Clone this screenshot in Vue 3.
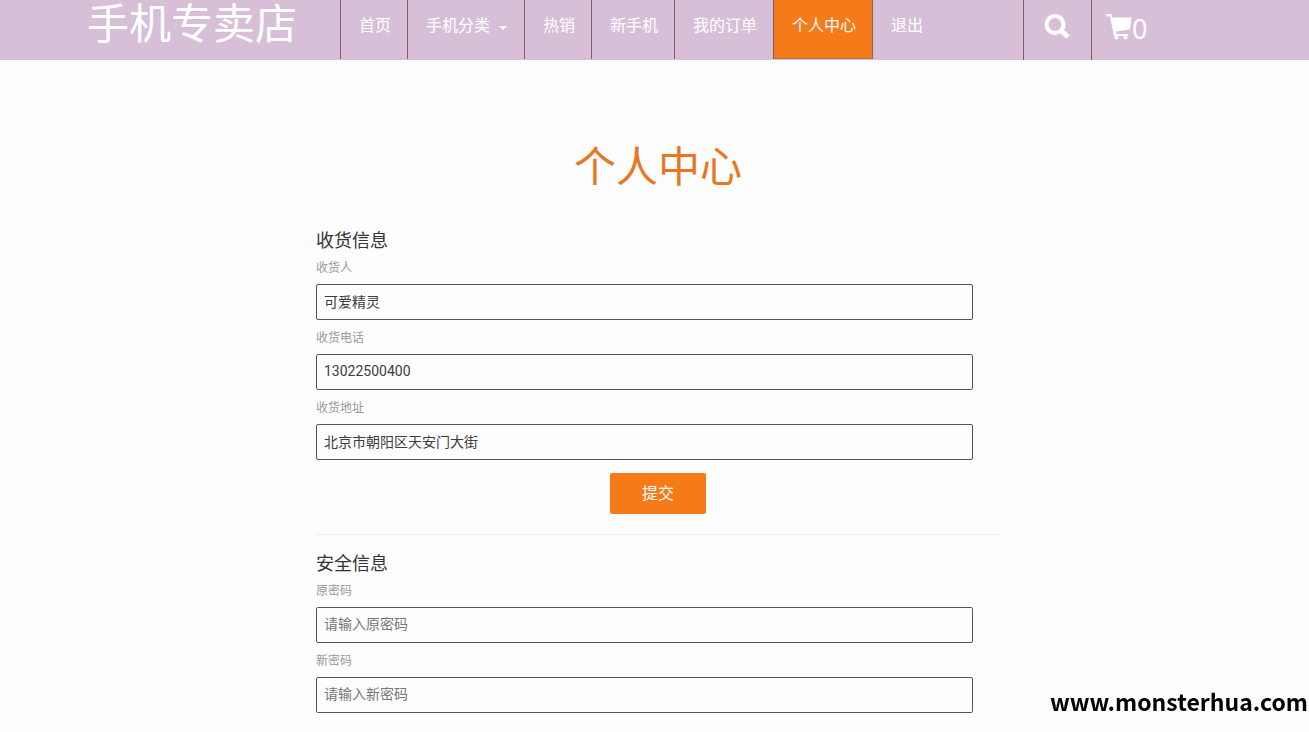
<script setup>
import { ref } from 'vue'

const navItems = [
  { label: '首页' },
  { label: '手机分类', caret: true },
  { label: '热销' },
  { label: '新手机' },
  { label: '我的订单' },
  { label: '个人中心', active: true },
  { label: '退出' }
]

const shipping = ref([
  { id: 'receiver', label: '收货人', type: 'text', value: '可爱精灵' },
  { id: 'phone', label: '收货电话', type: 'text', value: '13022500400' },
  { id: 'address', label: '收货地址', type: 'text', value: '北京市朝阳区天安门大街' }
])

const security = ref([
  { id: 'old-password', label: '原密码', placeholder: '请输入原密码', value: '' },
  { id: 'new-password', label: '新密码', placeholder: '请输入新密码', value: '' }
])
</script>

<template>
  <div class="page">
    <header class="header">
      <div class="bar">
        <a class="brand" href="#">手机专卖店</a>
        <nav class="nav">
          <a
            v-for="item in navItems"
            :key="item.label"
            href="#"
            class="nav-link"
            :class="{ active: item.active }"
          >{{ item.label }}<span v-if="item.caret" class="caret"></span></a>
        </nav>
        <div class="actions">
          <button class="search" type="button" aria-label="搜索">
            <svg width="28" height="28" viewBox="0 0 28 28">
              <circle cx="11" cy="11.500" r="8.500" fill="none" stroke="#fff" stroke-width="4" />
              <path d="M17.500 18l6.500 6" stroke="#fff" stroke-width="5" />
            </svg>
          </button>
          <a class="cart" href="#" aria-label="购物车">
            <svg width="26" height="27" viewBox="0 0 26 27" fill="#fff">
              <path d="M1 0h4.500l1 3.500H25.500L24 15.500l-14 2 .5 2.500H22v2H8L4 2.500H1a1.200 1.200 0 0 1 0-2.500z" />
              <circle cx="10.500" cy="23.500" r="2" />
              <circle cx="19.500" cy="23.500" r="2" />
            </svg>
            <span>0</span>
          </a>
        </div>
      </div>
    </header>

    <main class="main">
      <div class="content">
        <h1>个人中心</h1>
        <form @submit.prevent>
          <h2>收货信息</h2>
          <div v-for="field in shipping" :key="field.id" class="field">
            <label :for="field.id">{{ field.label }}</label>
            <input :id="field.id" v-model="field.value" :type="field.type" />
          </div>
          <button class="submit" type="submit">提交</button>
        </form>
        <hr />
        <form @submit.prevent>
          <h2>安全信息</h2>
          <div v-for="field in security" :key="field.id" class="field">
            <label :for="field.id">{{ field.label }}</label>
            <input
              :id="field.id"
              v-model="field.value"
              type="password"
              autocomplete="off"
              :placeholder="field.placeholder"
            />
          </div>
        </form>
      </div>
    </main>
    <div class="site-mark">www.monsterhua.com</div>
  </div>
</template>

<style>
body {
  margin: 0;
  background: #fdfdfd;
}
</style>

<style scoped>
.page {
  box-sizing: border-box;
  min-height: 100vh;
  font-family: Roboto, "Noto Sans CJK SC", sans-serif;
  color: #333;
}
.page *,
.page *::after {
  box-sizing: border-box;
}
.header {
  height: 60px;
  background: #d8bfd8;
}
.bar {
  display: grid;
  grid-template-columns: 254px 1fr 200px;
  max-width: 1137px;
  height: 60px;
  margin: 0 auto;
}
.brand {
  padding-left: 1px;
  color: #fff;
  font-size: 42px;
  line-height: 50px;
  text-decoration: none;
  white-space: nowrap;
}
.nav {
  display: flex;
  height: 59px;
}
.nav-link {
  display: flex;
  align-items: center;
  padding: 0 16px 8px 18px;
  border-left: 1px solid #7d6063;
  color: #fff;
  font-size: 16px;
  line-height: 24px;
  text-decoration: none;
  white-space: nowrap;
}
.nav-link:last-child {
  border-left-color: #8f6548;
}
.nav-link.active {
  background: #f47a1a;
  box-shadow: inset 0 -1px #a86c50;
}
.caret {
  margin: 4px 1px 0 9px;
  border-top: 4px solid #fff;
  border-left: 4px solid transparent;
  border-right: 4px solid transparent;
}
.actions {
  display: flex;
}
.search {
  width: 68px;
  padding: 0 0 6px;
  border: 0;
  border-left: 1px solid #7d6063;
  background: transparent;
  line-height: 0;
}
.cart {
  display: flex;
  align-items: center;
  padding: 0 14px 6px;
  border-left: 1px solid #7d6063;
  color: #fff;
  font-family: "Noto Sans", sans-serif;
  font-size: 27px;
  line-height: 32px;
  text-decoration: none;
}
.cart span {
  padding-top: 4px;
}
.main {
  padding: 78px 0 0 7px;
}
.content {
  max-width: 684px;
  margin: 0 auto;
}
h1 {
  margin: 0 0 31px;
  color: #e87722;
  font-size: 42px;
  font-weight: 400;
  line-height: 60px;
  text-align: center;
}
h2 {
  margin: 0;
  font-size: 18px;
  font-weight: 400;
  line-height: 24px;
}
.field {
  margin-bottom: 8px;
}
h2 + .field {
  padding-top: 5px;
}
label {
  display: block;
  margin-bottom: 6px;
  color: #999;
  font-size: 12px;
  line-height: 20px;
}
input {
  display: block;
  width: 96%;
  height: 36px;
  padding: 0 7px 2px;
  border: 1px solid #555;
  border-radius: 2px;
  background: transparent;
  color: #3c3c3c;
  font-family: inherit;
  font-size: 14px;
}
input::placeholder {
  color: #777;
  opacity: 1;
}
.submit {
  display: block;
  width: 96px;
  height: 41px;
  margin: 13px auto 20px;
  padding: 0 0 3px;
  border: 0;
  border-radius: 2px;
  background: #f47a1a;
  color: #fff;
  font-family: inherit;
  font-size: 16px;
}
hr {
  margin: 0 0 17px;
  border: 0;
  border-top: 1px solid #eee;
}
.site-mark {
  position: fixed;
  right: 1px;
  bottom: 13px;
  color: #000;
  font-family: "Noto Sans CJK SC", sans-serif;
  font-size: 23px;
  font-weight: 700;
  line-height: 36px;
}
</style>
